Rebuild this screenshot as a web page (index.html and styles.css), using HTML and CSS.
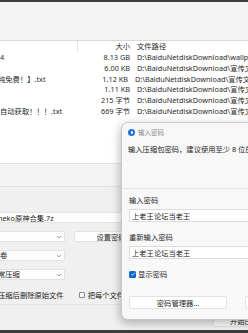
FILE: index.html
```html
<!DOCTYPE html>
<html>
<head>
<meta charset="utf-8">
<link rel="stylesheet" href="styles.css">
</head>
<body>
<div class="win">
  <div class="toolbar"></div>
  <div class="list">
    <div class="row head">
      <div class="c-name"></div>
      <div class="c-size">大小</div>
      <div class="c-path">文件路径</div>
    </div>
    <div class="row"><div class="c-name">4</div><div class="c-size">8.13 GB</div><div class="c-path">D:\BaiduNetdiskDownload\wallpaper</div></div>
    <div class="row"><div class="c-name"></div><div class="c-size">6.00 KB</div><div class="c-path">D:\BaiduNetdiskDownload\宣传文件</div></div>
    <div class="row"><div class="c-name cut">纯免费！】.txt</div><div class="c-size">1.12 KB</div><div class="c-path">D:\BaiduNetdiskDownload\宣传文件</div></div>
    <div class="row"><div class="c-name"></div><div class="c-size">1.11 KB</div><div class="c-path">D:\BaiduNetdiskDownload\宣传文件</div></div>
    <div class="row"><div class="c-name"></div><div class="c-size">215 字节</div><div class="c-path">D:\BaiduNetdiskDownload\宣传文件</div></div>
    <div class="row"><div class="c-name">自动获取！！！.txt</div><div class="c-size">669 字节</div><div class="c-path">D:\BaiduNetdiskDownload\宣传文件</div></div>
  </div>
  <div class="status"></div>
  <div class="form">
    <div class="field archive"><span class="cut">neko原神合集.7z</span></div>
    <div class="line">
      <div class="combo w65"><span></span><svg class="chev" width="6" height="4" viewBox="0 0 6 4"><path d="M1 1l2 2 2-2" fill="none" stroke="#888" stroke-width="0.8"/></svg></div>
      <div class="btn setpw">设置密码</div>
    </div>
    <div class="combo w65"><span>卷</span><svg class="chev" width="6" height="4" viewBox="0 0 6 4"><path d="M1 1l2 2 2-2" fill="none" stroke="#888" stroke-width="0.8"/></svg></div>
    <div class="combo w65"><span class="cut">常压缩</span><svg class="chev" width="6" height="4" viewBox="0 0 6 4"><path d="M1 1l2 2 2-2" fill="none" stroke="#888" stroke-width="0.8"/></svg></div>
    <div class="checks">
      <span class="cut">压缩后删除原始文件</span>
      <span class="chk-off"></span>
      <span>把每个文件/</span>
    </div>
  </div>
  <div class="bottom">
    <div class="btn start">开始压缩</div>
  </div>
</div>

<div class="dialog">
  <div class="dtitle">
    <span class="dicon"></span>
    <span>输入密码</span>
  </div>
  <div class="desc">输入压缩包密码，建议使用至少 8 位的密码</div>
  <div class="dbody">
    <div class="label">输入密码</div>
    <div class="input">上老王论坛当老王</div>
    <div class="label second">重新输入密码</div>
    <div class="input">上老王论坛当老王</div>
    <div class="show">
      <span class="chk-on"><svg width="6" height="6" viewBox="0 0 6 6"><path d="M1.2 3.1l1.2 1.2 2.4-2.6" fill="none" stroke="#fff" stroke-width="0.8"/></svg></span>
      <span>显示密码</span>
    </div>
    <div class="dbuttons">
      <div class="btn mgr">密码管理器...</div>
      <div class="btn ok">确定</div>
    </div>
  </div>
</div>
</body>
</html>
```

FILE: styles.css
```css
* { box-sizing: border-box; }
html, body { margin: 0; padding: 0; }
body {
  width: 248px;
  height: 333px;
  overflow: hidden;
  background: #3d3d3d;
  font-family: "Noto Sans", "Noto Sans CJK SC", sans-serif;
  font-size: 7.3px;
  color: #1f1f1f;
  position: relative;
}
.win {
  margin-top: 2px;
  height: 328px;
  background: #f0f0f0;
  display: flex;
  flex-direction: column;
}
.toolbar {
  height: 39px;
  background: #f3f3f3;
  border-bottom: 1px solid #d9d9d9;
}
.list {
  height: 123px;
  background: #fff;
  border-bottom: 1px solid #e2e2e2;
}
.row {
  display: flex;
  height: 10.7px;
  line-height: 10.7px;
  white-space: nowrap;
  color: #2a2a2a;
}
.row.head { height: 11.3px; line-height: 11.3px; }
.c-name { width: 78px; overflow: hidden; flex: none; }
.head .c-name { border-right: 1px solid #e6e6e6; }
.c-size { width: 52px; text-align: right; flex: none; }
.c-path { padding-left: 7px; overflow: hidden; flex: 1; }
.cut { margin-left: -2px; }
.status {
  height: 23px;
  background: #f4f4f4;
  border-bottom: 1px solid #e2e2e2;
}
.form {
  display: flex;
  flex-direction: column;
  padding-top: 25px;
  gap: 8px;
  height: 118px;
  border-bottom: 1px solid #e4e4e4;
}
.field, .combo, .btn {
  height: 11px;
  line-height: 11px;
  background: #fff;
  border: 1px solid #e3e3e3;
  border-left: none;
  white-space: nowrap;
  overflow: hidden;
}
.field { width: 140px; }
.line { display: flex; gap: 9px; }
.combo {
  width: 65px;
  display: flex;
  justify-content: space-between;
  align-items: center;
  padding-right: 2px;
  background: #fdfdfd;
}
.chev { flex: none; }
.btn {
  border-left: 1px solid #e3e3e3;
  border-radius: 2px;
  text-align: center;
  background: #fdfdfd;
  flex: none;
}
.setpw { width: 74px; }
.checks {
  display: flex;
  align-items: center;
  margin-top: 2px;
  white-space: nowrap;
}
.chk-off {
  width: 6px;
  height: 6px;
  border: 1px solid #8a8a8a;
  border-radius: 1px;
  margin-left: 15px;
  margin-right: 3px;
  background: #fafafa;
}
.bottom {
  flex: 1;
  display: flex;
  justify-content: flex-end;
  padding-top: 10px;
}
.start { width: 50px; margin-right: -15px; text-align: left; padding-left: 16px; height: 12px; }

.dialog {
  position: absolute;
  left: 121px;
  top: 122px;
  width: 140px;
  height: 198px;
  background: #f8f8f8;
  border: 1px solid #c9c9c9;
  border-radius: 7px;
  box-shadow: -1px 3px 10px rgba(0,0,0,0.28);
  overflow: hidden;
}
.dtitle {
  height: 18px;
  display: flex;
  align-items: center;
  padding-left: 6px;
  gap: 3px;
  color: #8a8a8a;
  font-size: 6.5px;
}
.dicon {
  width: 7px;
  height: 7px;
  border-radius: 50%;
  background: #1f6fd8;
  position: relative;
}
.dicon::after {
  content: "";
  position: absolute;
  left: 2.5px;
  top: 2px;
  width: 2px;
  height: 3px;
  background: #fff;
  border-radius: 1px;
}
.desc {
  height: 48px;
  padding-left: 6px;
  padding-top: 3px;
  line-height: 10px;
  white-space: nowrap;
  border-bottom: 1px solid #e4e4e4;
}
.dbody {
  padding-left: 7px;
  display: flex;
  flex-direction: column;
}
.label {
  margin-top: 6px;
  height: 10px;
  line-height: 10px;
}
.label.second { margin-top: 10px; }
.input {
  margin-top: 4px;
  height: 13px;
  line-height: 12px;
  background: #fff;
  border: 1px solid #dcdcdc;
  border-right: none;
  padding-left: 2px;
  white-space: nowrap;
}
.show {
  margin-top: 11px;
  display: flex;
  align-items: center;
  gap: 2px;
  height: 8px;
}
.chk-on {
  width: 7px;
  height: 7px;
  border-radius: 1.5px;
  background: #0f67c9;
  display: flex;
  align-items: center;
  justify-content: center;
}
.dbuttons {
  margin-top: 18px;
  display: flex;
  gap: 18px;
}
.mgr { width: 98px; height: 13px; line-height: 12px; border: 1px solid #e2e2e2; background: #fff; }
.ok { width: 40px; height: 13px; line-height: 12px; border: 1px solid #e2e2e2; background: #fff; }
```
